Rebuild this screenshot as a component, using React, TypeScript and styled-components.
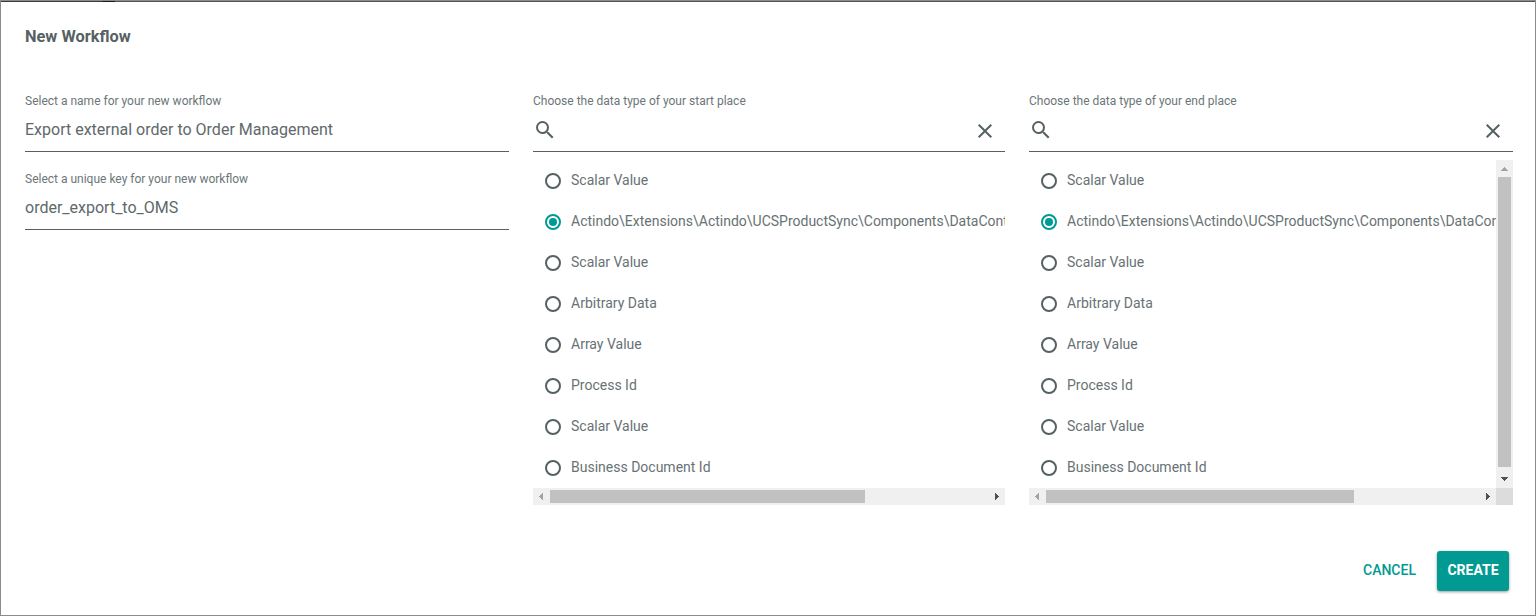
import React from "react";
import styled, { createGlobalStyle } from "styled-components";

const ink = "#566163";
const teal = "#009a93";

const GlobalStyle = createGlobalStyle`
  *, *::before, *::after { box-sizing: border-box; }
  body { margin: 0; background: #fff; font-family: Roboto, "Liberation Sans", sans-serif; color: ${ink}; }
`;

const Dialog = styled.main`
  display: flex;
  flex-direction: column;
  height: 616px;
  border: 1px solid #8c8c8c;
  background: #fff;
  overflow: hidden;
`;

const TopEdge = styled.div`
  height: 1px;
  flex: none;
  background: linear-gradient(to right, #3c3a3b 101px, #1c1a1b 101px, #1c1a1b 114px, #565455 114px);
`;

const Title = styled.h1`
  margin: 23px 24px 0;
  font-size: 16.35px;
  line-height: 24px;
  font-weight: 700;
`;

const Columns = styled.div`
  display: grid;
  grid-template-columns: 484px 472px 484px;
  column-gap: 24px;
  margin: 44px 0 0 24px;
`;

const Column = styled.section`
  display: flex;
  flex-direction: column;
  min-width: 0;
`;

const Field = styled.label`
  display: flex;
  flex-direction: column;
  height: 59px;
  border-bottom: 1px solid ${ink};
  & + & { margin-top: 19px; }
`;

const FieldLabel = styled.span`
  font-size: 12px;
  line-height: 16px;
  color: #6c7678;
`;

const FieldValue = styled.span`
  margin-top: 9px;
  font-size: 16px;
  line-height: 24px;
  color: #5e696b;
`;

const SearchRow = styled.span`
  display: flex;
  justify-content: space-between;
  margin-top: 9px;
  padding-right: 8px;
  svg { display: block; }
`;

const CloseIconWrap = styled.span`
  margin-top: 1px;
`;

const ListBox = styled.div<{ $vertical?: boolean }>`
  display: grid;
  grid-template-columns: minmax(0, 1fr) ${(p) => (p.$vertical ? "17px" : "")};
  grid-template-rows: 328px 17px;
  margin-top: 8px;
`;

const List = styled.ul`
  margin: 0;
  padding: 0;
  list-style: none;
  overflow: hidden;
`;

const Item = styled.li`
  display: flex;
  align-items: center;
  height: 41px;
  padding-left: 12px;
  font-size: 14px;
  white-space: nowrap;
  color: #687274;
`;

const ItemText = styled.span`
  padding-bottom: 2px;
`;

const Radio = styled.span<{ $on: boolean }>`
  flex: none;
  display: grid;
  place-items: center;
  width: 16px;
  height: 16px;
  margin: 1px 10px 0 0;
  border: 2px solid ${(p) => (p.$on ? teal : ink)};
  border-radius: 50%;
  &::after {
    content: "";
    width: 8px;
    height: 8px;
    border-radius: 50%;
    background: ${(p) => (p.$on ? teal : "transparent")};
  }
`;

const HBar = styled.div`
  display: flex;
  align-items: center;
  background: #f0f0f0;
`;

const VBar = styled(HBar)`
  flex-direction: column;
`;

const HThumb = styled.div<{ $size: number }>`
  width: ${(p) => p.$size}px;
  height: 13px;
  margin-right: auto;
  background: #c1c1c1;
`;

const VThumb = styled.div`
  width: 13px;
  height: 290px;
  margin-bottom: auto;
  background: #c1c1c1;
`;

const Corner = styled.div`
  background: #dcdcdc;
`;

const Actions = styled.footer`
  display: flex;
  justify-content: flex-end;
  margin: 46px 26px 0 0;
`;

const Button = styled.button<{ $primary?: boolean }>`
  width: ${(p) => (p.$primary ? 72 : 74)}px;
  height: 40px;
  padding: 0 0 2px;
  margin-left: ${(p) => (p.$primary ? 10.5 : 0)}px;
  border: 0;
  border-radius: 3px;
  font: ${(p) => (p.$primary ? 700 : 500)} 14px Roboto, "Liberation Sans", sans-serif;
  color: ${(p) => (p.$primary ? "#fff" : teal)};
  background: ${(p) => (p.$primary ? teal : "transparent")};
  box-shadow: ${(p) => (p.$primary ? "0 1px 3px rgba(0,0,0,.4)" : "none")};
`;

const arrows = {
  left: "M10 5v7L6 8.5z",
  right: "M7 5v7l4-3.5z",
  up: "M5 11h7L8.5 7z",
  down: "M5 6h7l-3.5 4z",
};

const Arrow = ({ dir, muted }: { dir: keyof typeof arrows; muted?: boolean }) => (
  <svg width="17" height="17" viewBox="0 0 17 17" style={{ flex: "none" }} shapeRendering="crispEdges">
    <path d={arrows[dir]} fill={muted ? "#a3a3a3" : "#505050"} />
  </svg>
);

const SearchIcon = () => (
  <svg width="24" height="24" viewBox="0 0 24 24" fill={ink}>
    <path d="M15.5 14h-.79l-.28-.27A6.471 6.471 0 0 0 16 9.500 6.500 6.500 0 1 0 9.500 16c1.610 0 3.090-.59 4.230-1.570l.27.28v.79l5 4.990L20.490 19l-4.990-5zm-6 0C7.010 14 5 11.990 5 9.500S7.010 5 9.500 5 14 7.010 14 9.500 11.990 14 9.500 14z" />
  </svg>
);

const CloseIcon = () => (
  <svg width="24" height="24" viewBox="0 0 24 24" fill={ink}>
    <path d="M19 6.410 17.590 5 12 10.590 6.410 5 5 6.410 10.590 12 5 17.590 6.410 19 12 13.410 17.590 19 19 17.590 13.410 12z" />
  </svg>
);

const types = [
  "Scalar Value",
  "Actindo\\Extensions\\Actindo\\UCSProductSync\\Components\\DataContainer",
  "Scalar Value",
  "Arbitrary Data",
  "Array Value",
  "Process Id",
  "Scalar Value",
  "Business Document Id",
];

const TypePicker = ({ label, thumb, vertical }: { label: string; thumb: number; vertical?: boolean }) => (
  <Column>
    <Field as="div">
      <FieldLabel>{label}</FieldLabel>
      <SearchRow>
        <SearchIcon />
        <CloseIconWrap><CloseIcon /></CloseIconWrap>
      </SearchRow>
    </Field>
    <ListBox $vertical={vertical}>
      <List>
        {types.map((type, i) => (
          <Item key={i}>
            <Radio $on={i === 1} />
            <ItemText>{type}</ItemText>
          </Item>
        ))}
      </List>
      {vertical && (
        <VBar>
          <Arrow dir="up" muted />
          <VThumb />
          <Arrow dir="down" />
        </VBar>
      )}
      <HBar>
        <Arrow dir="left" muted />
        <HThumb $size={thumb} />
        <Arrow dir="right" />
      </HBar>
      {vertical && <Corner />}
    </ListBox>
  </Column>
);

export default function App() {
  return (
    <>
      <GlobalStyle />
      <Dialog>
        <TopEdge />
        <Title>New Workflow</Title>
        <Columns>
          <Column>
            <Field>
              <FieldLabel>Select a name for your new workflow</FieldLabel>
              <FieldValue>Export external order to Order Management</FieldValue>
            </Field>
            <Field>
              <FieldLabel>Select a unique key for your new workflow</FieldLabel>
              <FieldValue>order_export_to_OMS</FieldValue>
            </Field>
          </Column>
          <TypePicker label="Choose the data type of your start place" thumb={315} />
          <TypePicker label="Choose the data type of your end place" thumb={308} vertical />
        </Columns>
        <Actions>
          <Button>CANCEL</Button>
          <Button $primary>CREATE</Button>
        </Actions>
      </Dialog>
    </>
  );
}
